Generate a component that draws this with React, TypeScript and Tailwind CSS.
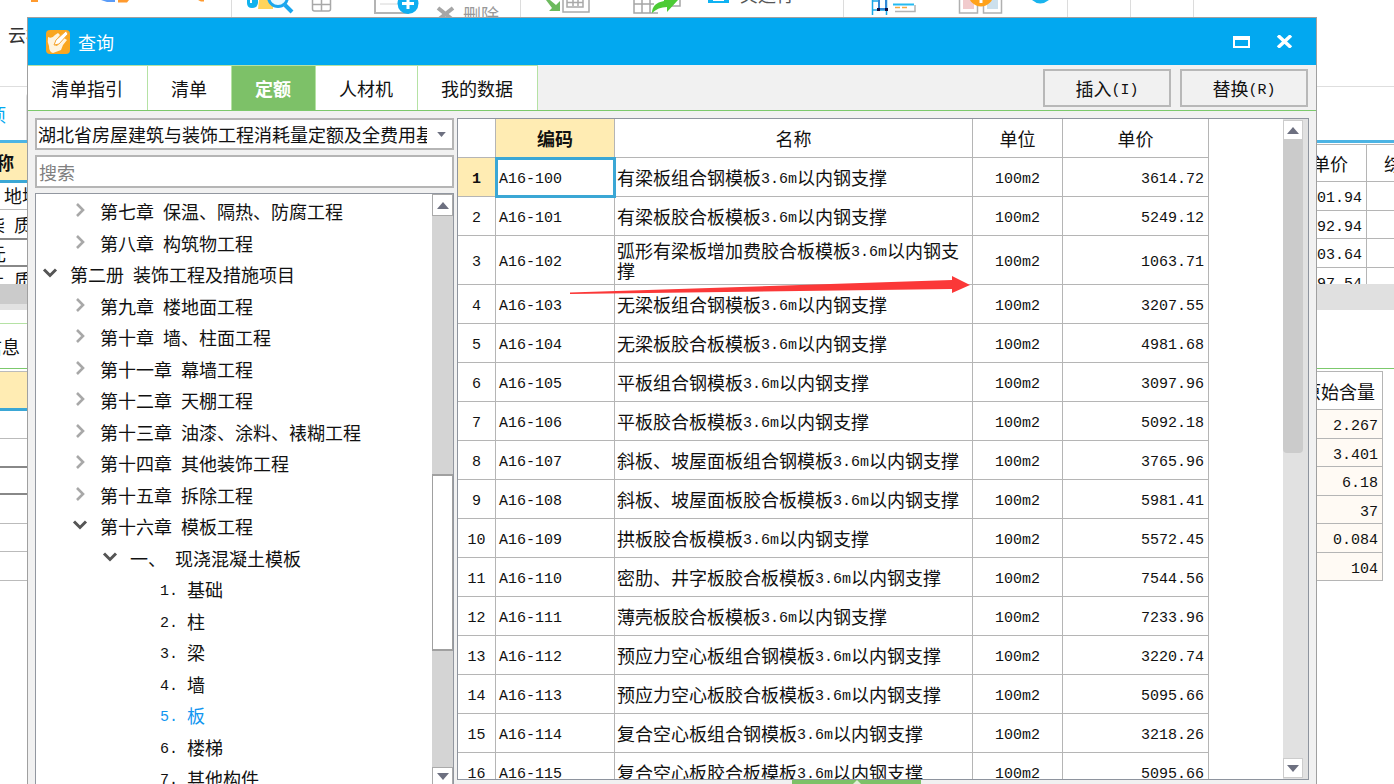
import { useState } from "react";
import clsx from "clsx";

interface TreeNode {
  level: number;
  label: string;
  state?: "open" | "closed";
}

interface QuotaRow {
  code: string;
  name: string;
  price: string;
}

const TABS = ["清单指引", "清单", "定额", "人材机", "我的数据"];

const TREE: TreeNode[] = [
  { level: 1, label: "第七章 保温、隔热、防腐工程", state: "closed" },
  { level: 1, label: "第八章 构筑物工程", state: "closed" },
  { level: 0, label: "第二册 装饰工程及措施项目", state: "open" },
  { level: 1, label: "第九章 楼地面工程", state: "closed" },
  { level: 1, label: "第十章 墙、柱面工程", state: "closed" },
  { level: 1, label: "第十一章 幕墙工程", state: "closed" },
  { level: 1, label: "第十二章 天棚工程", state: "closed" },
  { level: 1, label: "第十三章 油漆、涂料、裱糊工程", state: "closed" },
  { level: 1, label: "第十四章 其他装饰工程", state: "closed" },
  { level: 1, label: "第十五章 拆除工程", state: "closed" },
  { level: 1, label: "第十六章 模板工程", state: "open" },
  { level: 2, label: "一、 现浇混凝土模板", state: "open" },
  { level: 3, label: "1. 基础" },
  { level: 3, label: "2. 柱" },
  { level: 3, label: "3. 梁" },
  { level: 3, label: "4. 墙" },
  { level: 3, label: "5. 板" },
  { level: 3, label: "6. 楼梯" },
  { level: 3, label: "7. 其他构件" },
];

const ROWS: QuotaRow[] = [
  { code: "A16-100", name: "有梁板组合钢模板3.6m以内钢支撑", price: "3614.72" },
  { code: "A16-101", name: "有梁板胶合板模板3.6m以内钢支撑", price: "5249.12" },
  { code: "A16-102", name: "弧形有梁板增加费胶合板模板3.6m以内钢支撑", price: "1063.71" },
  { code: "A16-103", name: "无梁板组合钢模板3.6m以内钢支撑", price: "3207.55" },
  { code: "A16-104", name: "无梁板胶合板模板3.6m以内钢支撑", price: "4981.68" },
  { code: "A16-105", name: "平板组合钢模板3.6m以内钢支撑", price: "3097.96" },
  { code: "A16-106", name: "平板胶合板模板3.6m以内钢支撑", price: "5092.18" },
  { code: "A16-107", name: "斜板、坡屋面板组合钢模板3.6m以内钢支撑", price: "3765.96" },
  { code: "A16-108", name: "斜板、坡屋面板胶合板模板3.6m以内钢支撑", price: "5981.41" },
  { code: "A16-109", name: "拱板胶合板模板3.6m以内钢支撑", price: "5572.45" },
  { code: "A16-110", name: "密肋、井字板胶合板模板3.6m以内钢支撑", price: "7544.56" },
  { code: "A16-111", name: "薄壳板胶合板模板3.6m以内钢支撑", price: "7233.96" },
  { code: "A16-112", name: "预应力空心板组合钢模板3.6m以内钢支撑", price: "3220.74" },
  { code: "A16-113", name: "预应力空心板胶合板模板3.6m以内钢支撑", price: "5095.66" },
  { code: "A16-114", name: "复合空心板组合钢模板3.6m以内钢支撑", price: "3218.26" },
  { code: "A16-115", name: "复合空心板胶合板模板3.6m以内钢支撑", price: "5095.66" },
];

const INDENT = ["pl-1", "pl-[34px]", "pl-16", "pl-[94px]"];

// latin runs are set half as wide as a chinese character
function Mixed({ text }: { text: string }) {
  return (
    <>
      {text.split(/([\x20-\x7e]+)/).map((part, i) =>
        i % 2 ? (
          <span key={i} className="align-[2px] whitespace-pre font-['Liberation_Mono',monospace] text-[15px] leading-3">{part}</span>
        ) : (
          part
        )
      )}
    </>
  );
}

function Triangle({ up, className = "h-[7px] w-3" }: { up?: boolean; className?: string }) {
  return (
    <svg viewBox="0 0 12 7" className={className} fill="#6d7080" aria-hidden="true">
      <path d={up ? "M0 7 6 0l6 7z" : "M0 0h12L6 7z"} />
    </svg>
  );
}

function Chevron({ state }: { state?: "open" | "closed" }) {
  if (!state) return <span className="w-5" />;
  return (
    <svg viewBox="0 0 20 20" className="size-5" fill="none" strokeWidth="3" aria-hidden="true">
      {state === "open" ? (
        <path d="M4 5.500 10 11.500 16 5.500" stroke="#555" />
      ) : (
        <path d="M7 3 13 9 7 15" stroke="#a8a8a8" strokeWidth="2.600" />
      )}
    </svg>
  );
}

function Toolbar() {
  return (
    <header className="flex h-[87px] shrink-0 border-b border-[#dedede]">
      <div className="w-[232px] shrink-0 border-r border-[#dcdcdc]">
        <svg viewBox="0 0 231 18" className="h-[18px] w-[231px]" aria-hidden="true">
          <path d="M31 0h7v2h-7z M118 0h11l-2 2.500h-9z M198 0h6v1.500h-3z" fill="#ff9a2e" />
          <path d="M101 0h14v2h-8z" fill="#5a9cf8" />
        </svg>
        <p className="w-[30px] overflow-hidden pl-2 pt-1 whitespace-nowrap text-[#333]">云检查</p>
      </div>
      <div className="flex w-[289px] shrink-0 items-start border-r border-[#dcdcdc]">
        <svg viewBox="232 0 231 18" className="h-[18px] w-[231px]" fill="none" aria-hidden="true">
          <path d="M247 0h11v3q-1 5-6 5t-5-5z" fill="#10b2ee" />
          <path d="M250 0h2v3h-2z" fill="#fff" />
          <path d="M259 0h14v9h-15z" fill="#ffd45c" />
          <circle cx="278" cy="-3" r="9.500" fill="#eaf8ff" stroke="#1ba6ee" strokeWidth="3" />
          <path d="m285 5 7 7" stroke="#1ba6ee" strokeWidth="4" />
          <path d="M312.500-2v11q0 2 2 2h14q2 0 2-2v-11M312 4.500h19M321.500 0v11" stroke="#a8a8a8" strokeWidth="1.500" />
          <path d="M375-2v15h33V0" stroke="#b4b4b4" strokeWidth="2" />
          <path d="M380 4h18" stroke="#d6d6d6" />
          <circle cx="408" cy="3.500" r="10.500" fill="#10aef0" />
          <path d="M402 3.500h12M408-2v11" stroke="#fff" strokeWidth="3" />
          <path d="m438 8 15 12M453 8l-15 12" stroke="#a6a6a6" strokeWidth="4" />
        </svg>
        <span className="pt-1 text-lg leading-5 text-[#999]">删除</span>
      </div>
      <div className="flex w-[323px] shrink-0 items-start border-r border-[#dcdcdc]">
        <svg viewBox="521 0 219 18" className="h-[18px] w-[219px]" fill="none" aria-hidden="true">
          <path d="M546 0h4l6 5 4-4v10h-11l3-3z" fill="#6dba5e" />
          <path d="M563 0v12h26V0M567 0v7h16V0M573 0v6M578 0v6M567 2.500h16" stroke="#a9a9a9" strokeWidth="1.500" />
          <path d="M634 0v13h24M634 4h20M642 0v13M650 0v13M668 6h12V0" stroke="#a5a5a5" strokeWidth="1.500" />
          <path d="M652 13q0-10 12-12v-3h14v2l-11 12v-5q-9 0-15 6z" fill="#4ccb35" />
          <path d="M708 0h21v3h-21z" fill="#0fb2f2" />
          <path d="M713 0h11v1h-11z" fill="#fff" />
        </svg>
        <span className="-mt-4 text-lg leading-5 text-[#555]">其运行</span>
      </div>
      <div className="w-[224px] shrink-0 border-r border-[#dcdcdc]">
        <svg viewBox="844 0 223 18" className="h-[18px] w-[223px]" fill="none" aria-hidden="true">
          <path d="M872.500 0v15M886.500 0v15M872 10h15M872 1h6" stroke="#19a9e8" strokeWidth="1.500" />
          <path d="M879 0v9h7V0" stroke="#3388d6" strokeWidth="2" />
          <path d="M877 8h3v3h-3zM885 8h3v3h-3z" fill="#114" />
          <path d="M893 4.500h21" stroke="#25baf0" strokeWidth="2" />
          <path d="M895 11.500h20V5" stroke="#b3b3b3" strokeWidth="1.500" />
          <path d="M895 7.500h5M902 7.500h5" stroke="#f5a944" strokeWidth="1.500" />
          <path d="M959.500 0v13h18V0M983.500 0v13h18V0" stroke="#b0b0b0" strokeWidth="1.500" />
          <path d="M963 0h11v9h-11z" fill="#f1cbcd" />
          <path d="M987 0h11v9h-11z" fill="#cde0ec" />
          <circle cx="981" cy="-6" r="12.500" fill="#ffa21a" />
          <path d="M981-2v5" stroke="#fff" strokeWidth="3" />
          <path d="M1032 0q8 7 17 0z" fill="#19b4ee" />
        </svg>
      </div>
      <div className="w-[63px] shrink-0 border-r border-[#dcdcdc]" />
      <div className="w-[63px] shrink-0 border-r border-[#dcdcdc]" />
    </header>
  );
}

// the edges of the budget sheet that stay visible around the dialog
function SheetLeft() {
  return (
    <div className="w-7 overflow-hidden whitespace-nowrap">
      <div className="flex h-[37px] items-center justify-end bg-[#ffecb3] pr-3.5 font-bold">名称</div>
      <div className="h-[3px] bg-[#3ba7d5]" />
      <div className="h-[27px] border-b border-[#bbb] pl-1">地坪</div>
      <div className="flex h-[30px] items-center justify-end border-b-2 border-[#888]">
        <span className="-mr-1"><Mixed text="柒 质" /></span>
      </div>
      <div className="flex h-[27px] items-center border-b-2 border-[#888]"><span className="-ml-3">元</span></div>
      <div className="flex h-[17px] items-start justify-end overflow-hidden">
        <span className="-mr-1"><Mixed text="土 质" /></span>
      </div>
      <div className="h-5 bg-[#cbcbcb]" />
      <div className="h-1.5 bg-[#e2e2e2]" />
      <div className="h-3.5 border-b border-[#b5e2a4]" />
      <div className="flex h-[45px] items-center justify-end border-b border-[#7cc96c] pr-2">信息</div>
      <div className="mt-0.5 h-[37px] border-t border-[#bbb] bg-[#ffecb3]" />
      <div className="h-[3px] bg-[#3ba7d5]" />
      <div className="h-7 border-b border-[#bbb]" />
      <div className="h-[29px] border-b-2 border-[#888]" />
      <div className="h-[27px] border-b-2 border-[#888]" />
      <div className="h-[29px] border-b border-[#bbb]" />
      <div className="h-7 border-b border-[#bbb]" />
      <div className="h-[29px] border-b border-[#bbb]" />
    </div>
  );
}

function SheetRight() {
  return (
    <div className="w-[78px] overflow-hidden whitespace-nowrap">
      <div className="mt-px flex h-[38px] border-y border-[#b5b5b5]">
        <div className="flex w-[51px] items-center justify-end border-r border-[#b5b5b5] pr-[18px]">单价</div>
        <div className="flex items-center pl-[17px]">综合</div>
      </div>
      <div className="h-[102px] overflow-hidden">
        {["2501.94", "2692.94", "2703.64", "2897.54"].map((value) => (
          <div key={value} className="flex h-7 odd:h-[29px] border-b border-[#b5b5b5]">
            <div className="flex w-[51px] items-center justify-end border-r border-[#b5b5b5] pr-1"><span><Mixed text={value} /></span></div>
          </div>
        ))}
      </div>
      <div className="h-[26px] bg-[#e0e0e0]" />
      <div className="h-[59px] border-b border-[#7cc96c]" />
      <div className="mt-0.5 w-[67px] border-t border-r border-[#b5b5b5]">
        <div className="flex h-[38px] items-center justify-end border-b border-[#b5b5b5] pr-[7px]">原始含量</div>
        <div>
          {["2.267", "3.401", "6.18", "37", "0.084", "104"].map((value) => (
            <div key={value} className="flex h-7 odd:h-[29px] items-center justify-end border-b border-[#b5b5b5] bg-[#fffaf4] pr-1"><span><Mixed text={value} /></span></div>
          ))}
        </div>
      </div>
    </div>
  );
}

function ChapterTree() {
  const [current, setCurrent] = useState("5. 板");

  return (
    <div className="flex min-h-0 flex-1 overflow-hidden border border-b-0 border-[#9297a0] bg-white">
      <ul className="min-w-0 flex-1 pt-px">
        {TREE.map((node) => (
          <li key={node.label} className="h-8 even:h-[31px]">
            <button
              onClick={() => setCurrent(node.label)}
              className={clsx(
                "flex h-full w-full items-center gap-2.5 whitespace-nowrap",
                INDENT[node.level],
                node.label === current && "text-[#1296f0]"
              )}
            >
              <Chevron state={node.state} />
              <span><Mixed text={node.label} /></span>
            </button>
          </li>
        ))}
      </ul>
      <div className="flex w-[21px] flex-col bg-[#d4d4d4]">
        <button aria-label="向上滚动" className="flex h-[22px] shrink-0 items-center justify-center border border-[#aaa] bg-white">
          <Triangle up />
        </button>
        <div className="grow-[260]" />
        <div className="grow-[175] border-2 border-x border-[#a0a0a0] bg-white" />
        <div className="grow-[117]" />
        <button aria-label="向下滚动" className="flex h-[17px] shrink-0 items-center justify-center border border-b-0 border-[#aaa] bg-white">
          <Triangle />
        </button>
      </div>
    </div>
  );
}

function QuotaTable() {
  const [selected, setSelected] = useState(0);

  return (
    <div className="flex min-h-0 flex-1 justify-between overflow-hidden border border-[#8e949e] bg-white">
      <div className="min-w-0 overflow-hidden">
        <table className="w-[751px] table-fixed border-separate border-spacing-0">
          <colgroup>
            <col className="w-[38px]" />
            <col className="w-[119px]" />
            <col className="w-[358px]" />
            <col className="w-[90px]" />
            <col className="w-[146px]" />
          </colgroup>
          <thead>
            <tr className="h-[39px]">
              <th className="border-r border-b border-[#b5b5b5]" />
              <th className="border-r border-b border-[#b5b5b5] bg-[#ffecb3] p-0 font-bold">编码</th>
              <th className="border-r border-b border-[#b5b5b5] p-0 font-normal">名称</th>
              <th className="border-r border-b border-[#b5b5b5] p-0 font-normal">单位</th>
              <th className="border-r border-b border-[#b5b5b5] p-0 font-normal">单价</th>
            </tr>
          </thead>
          <tbody>
            {ROWS.map((row, i) => (
              <tr key={row.code} onClick={() => setSelected(i)} className={i === 2 ? "h-[49px]" : "h-[39px]"}>
                <th
                  className={clsx(
                    "border-r border-b border-[#b5b5b5] p-0",
                    i === selected ? "bg-[#ffecb3] font-bold" : "font-normal"
                  )}
                >
                  <Mixed text={String(i + 1)} />
                </th>
                <td
                  className={clsx(
                    "border-r border-b border-[#b5b5b5] py-0 pr-0 pl-[3px]",
                    i === selected && "relative outline-3 -outline-offset-2 outline-[#3ba7d5]"
                  )}
                >
                  <Mixed text={row.code} />
                </td>
                <td className="border-r border-b border-[#b5b5b5] py-0 pr-0 pl-0.5 leading-5"><Mixed text={row.name} /></td>
                <td className="border-r border-b border-[#b5b5b5] p-0 text-center"><Mixed text="100m2" /></td>
                <td className="border-r border-b border-[#b5b5b5] py-0 pr-1 pl-0 text-right"><Mixed text={row.price} /></td>
              </tr>
            ))}
          </tbody>
        </table>
      </div>
      <div className="flex w-[25px] shrink-0 flex-col bg-[#e1e1e1] pt-px pr-[5px] pb-px">
        <button aria-label="向上滚动" className="flex h-5 shrink-0 items-center justify-center border border-[#ccc] bg-white">
          <Triangle up />
        </button>
        <div className="grow-[313] rounded-b-sm bg-[#cbcbcb]" />
        <div className="grow-[305]" />
        <button aria-label="向下滚动" className="flex h-5 shrink-0 items-center justify-center border border-[#ccc] bg-white">
          <Triangle />
        </button>
      </div>
    </div>
  );
}

function QueryDialog() {
  const [tab, setTab] = useState("定额");

  return (
    <section
      role="dialog"
      aria-label="查询"
      className="absolute top-[17px] right-[77px] bottom-0 left-[27px] flex flex-col border border-b-0 border-[#a0a0a0] bg-[#f1f1f1]"
    >
      <div className="flex h-[47px] shrink-0 items-center bg-[#02a8f0] pr-[23px] pl-[18px] text-white">
        <svg viewBox="0 0 24 24" className="size-6" aria-hidden="true">
          <rect width="24" height="24" rx="4" fill="#f9a620" />
          <path d="M2 7Q6 9 9 5l3-2 2 2-4 5-2 5 3 1 7-8 3 2-4 5-2 5-8 3q-4-1-4-7Q1 12 2 7z" fill="#fff4df" />
          <path d="m8 15 2-5 10-9 2 3-9 10z" fill="#fff" stroke="#f6a93a" />
        </svg>
        <h1 className="flex-1 pl-2">查询</h1>
        <button aria-label="最大化" className="mr-[26px]">
          <svg viewBox="0 0 17 12" className="h-3 w-[17px]" aria-hidden="true">
            <path d="M1 1h15v10H1z" fill="none" stroke="#fff" strokeWidth="2" />
            <path d="M0 0h17v4H0z" fill="#fff" />
          </svg>
        </button>
        <button aria-label="关闭">
          <svg viewBox="0 0 17 13" className="h-[13px] w-[17px]" aria-hidden="true">
            <path d="M2 0.500 15 12.500M15 0.500 2 12.500" stroke="#fff" strokeWidth="3.500" />
          </svg>
        </button>
      </div>
      <div className="flex h-[46px] shrink-0 border-b border-[#7cc96c]">
        <div className="flex flex-1">
          {TABS.map((name) => (
            <button
              key={name}
              onClick={() => setTab(name)}
              className={clsx(
                "border-t border-r border-[#b5e2a4] pr-6 pl-[23px]",
                name === tab ? "bg-[#7dc168] font-bold text-white" : "bg-white"
              )}
            >
              {name}
            </button>
          ))}
        </div>
        <div className="flex gap-[9px] pt-1 pr-2 pb-[3px]">
          <button className="w-32 border-2 border-[#b8b8b8]"><Mixed text="插入(I)" /></button>
          <button className="w-32 border-2 border-[#b8b8b8]"><Mixed text="替换(R)" /></button>
        </div>
      </div>
      <div className="flex min-h-0 flex-1 gap-[3px] pt-[7px] pr-[7px] pl-[7px]">
        <div className="flex w-[419px] shrink-0 flex-col gap-[5px]">
          <div className="grid h-8 shrink-0 items-center">
            <select
              aria-label="定额库"
              className="col-start-1 row-start-1 h-8 w-full min-w-0 appearance-none border-2 border-[#b5b5b5] bg-white pr-[25px] pl-px"
            >
              <option>湖北省房屋建筑与装饰工程消耗量定额及全费用基期价格表</option>
            </select>
            <Triangle className="pointer-events-none col-start-1 row-start-1 mr-2 h-[5px] w-[9px] justify-self-end" />
          </div>
          <input
            aria-label="搜索"
            placeholder="搜索"
            className="h-[33px] w-full shrink-0 border-2 border-[#b5b5b5] bg-white pl-0.5 placeholder:text-[#808080]"
          />
          <ChapterTree />
        </div>
        <div className="flex min-w-0 flex-1 flex-col">
          <QuotaTable />
          <button aria-label="展开" className="ml-[335px] flex h-1 w-[129px] justify-center overflow-hidden bg-[#7dc168]">
            <svg viewBox="0 0 8 4" className="h-1 w-2" aria-hidden="true">
              <path d="M0 4 4 0l4 4z" fill="#dff2d8" />
            </svg>
          </button>
        </div>
      </div>
    </section>
  );
}

export default function App() {
  return (
    <main className="relative flex h-screen flex-col overflow-hidden bg-white font-['Noto_Sans_CJK_SC',sans-serif] text-lg leading-6 text-[#111]">
      <Toolbar />
      <div className="flex h-[53px] shrink-0 items-center">
        <div className="flex w-1.5 justify-end overflow-hidden whitespace-nowrap text-[#02a8f0]">单项</div>
        <div className="mt-1.5 ml-5 w-10 self-stretch rounded-tl border-l border-[#ddd]" />
      </div>
      <div className="h-[3px] shrink-0 bg-[#4cb4e4]" />
      <div className="flex justify-between">
        <SheetLeft />
        <SheetRight />
      </div>
      <QueryDialog />
      <svg viewBox="0 0 400 18" className="pointer-events-none absolute top-[276px] left-[570px] h-[18px] w-[400px]" fill="#fb3838" aria-hidden="true">
        <path d="M0 16.500 382 4V0l18 9-18 8v-4L0 18z" />
      </svg>
    </main>
  );
}
